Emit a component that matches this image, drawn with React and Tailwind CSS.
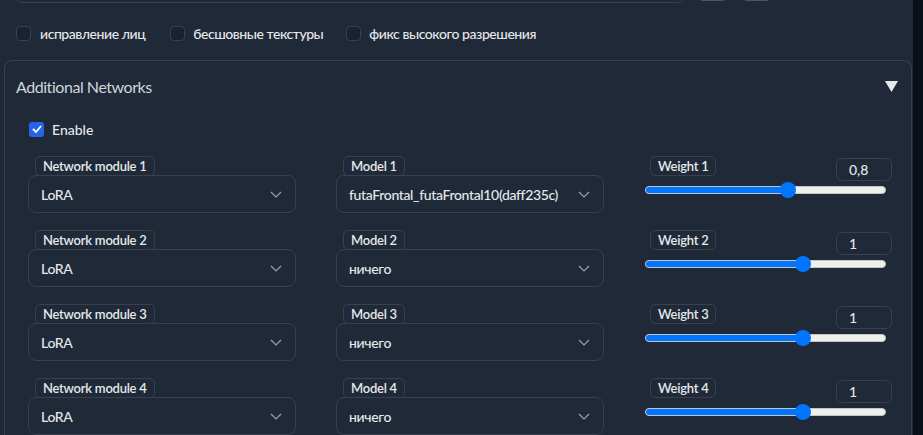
import React from "react";

const rows = [
  { n: 1, model: "futaFrontal_futaFrontal10(daff235c)", weight: 0.8 },
  { n: 2, model: "ничего", weight: 1 },
  { n: 3, model: "ничего", weight: 1 },
  { n: 4, model: "ничего", weight: 1 },
];

const Chevron = () => (
  <svg width="12" height="7" viewBox="0 0 12 7" fill="none">
    <polyline points="1,1 6,6 11,1" stroke="#9ca3af" strokeWidth="1.2" />
  </svg>
);

const Badge = ({ children, className = "" }) => (
  <div
    className={`h-[20px] px-[7px] flex items-center rounded-[5px] border border-[#374151] bg-[#1f2937] text-[13px] font-semibold tracking-[-0.25px] text-[#e5e7eb] leading-none ${className}`}
  >
    {children}
  </div>
);

const Select = ({ label, value }) => (
  <div className="w-[268px] flex flex-col">
    <Badge className="self-start ml-[7px] relative z-10">{label}</Badge>
    <div className="h-[38px] mt-[-1px] rounded-[8px] border border-[#374151] bg-[#1f2937] flex items-center justify-between pl-[12px] pr-[13px]">
      <span className="text-[14px] font-medium tracking-[-0.35px] text-[#e5e7eb]">{value}</span>
      <Chevron />
    </div>
  </div>
);

const Slider = ({ n, value }) => {
  const f = (value + 1) / 3;
  const center = 8 + f * 225;
  const shown = String(value).replace(".", ",");
  return (
    <div className="w-[247px] flex flex-col">
      <div className="flex justify-between items-start">
        <Badge className="ml-[5px]">Weight {n}</Badge>
        <div className="mt-[2px] w-[56px] h-[23px] rounded-[6px] border border-[#374151] flex items-center pl-[12px] text-[14px] font-medium text-[#e5e7eb]">
          {shown}
        </div>
      </div>
      <div className="relative w-[241px] h-[16px] mt-[1px] flex items-center">
        <div className="w-full h-[8px] rounded-full bg-[#efefef] border border-[#c4c4c4] overflow-hidden">
          <div className="h-full bg-[#0075ff]" style={{ width: center }} />
        </div>
        <div
          className="absolute top-0 w-[16px] h-[16px] rounded-full bg-[#0075ff]"
          style={{ left: center - 8 }}
        />
      </div>
    </div>
  );
};

const Box = ({ checked }) =>
  checked ? (
    <div className="w-[15px] h-[15px] rounded-[3px] bg-[#2563eb] flex items-center justify-center">
      <svg width="10" height="8" viewBox="0 0 10 8" fill="none">
        <polyline points="1,4 4,7 9,1" stroke="#fff" strokeWidth="1.8" />
      </svg>
    </div>
  ) : (
    <div className="w-[15px] h-[15px] rounded-[4px] border border-[#374151] bg-[#1a2230]" />
  );

export default function App() {
  return (
    <div
      className="w-[923px] h-[435px] bg-[#0b0f19] flex overflow-hidden"
      style={{ fontFamily: "Lato, 'Noto Sans', sans-serif" }}
    >
      <div className="w-[913px] h-full bg-[#1f2937] flex flex-col">
        <div className="flex items-start mt-[-37px] h-[40px]">
          <div className="ml-[15px] w-[671px] h-[40px] rounded-[8px] border border-[#374151]" />
          <div className="ml-[11px] w-[31px] h-[38px] rounded-[6px] bg-[#374151] border border-[#4b5563]" />
          <div className="ml-[13px] w-[31px] h-[38px] rounded-[6px] bg-[#374151] border border-[#4b5563]" />
        </div>

        <div className="flex items-center h-[20px] mt-[20px] pl-[16px] text-[14px] font-medium tracking-[-0.45px] text-[#e5e7eb]">
          <Box />
          <span className="ml-[9px]">исправление лиц</span>
          <div className="ml-[25px]"><Box /></div>
          <span className="ml-[8px]">бесшовные текстуры</span>
          <div className="ml-[23px]"><Box /></div>
          <span className="ml-[8px]">фикс высокого разрешения</span>
        </div>

        <div className="ml-[4px] mt-[17px] w-[908px] flex-1 rounded-t-[8px] border border-b-0 border-[#374151] flex flex-col">
          <div className="h-[51px] flex items-center justify-between pl-[11px] pr-[13px]">
            <span className="text-[16px] tracking-[-0.45px] text-[#d1d5db]">Additional Networks</span>
            <svg width="13" height="11" viewBox="0 0 13 11">
              <polygon points="0,0 13,0 6.5,11" fill="#e5e7eb" />
            </svg>
          </div>

          <div className="h-[34px] flex items-center pl-[24px]">
            <Box checked />
            <span className="ml-[8px] text-[14px] font-medium text-[#e5e7eb]">Enable</span>
          </div>

          <div className="flex flex-col gap-[17px] mt-[10px] pl-[23px]">
            {rows.map((r) => (
              <div key={r.n} className="flex items-start">
                <Select label={`Network module ${r.n}`} value="LoRA" />
                <div className="ml-[40px]">
                  <Select label={`Model ${r.n}`} value={r.model} />
                </div>
                <div className="ml-[41px]">
                  <Slider n={r.n} value={r.weight} />
                </div>
              </div>
            ))}
          </div>
        </div>
      </div>
    </div>
  );
}
